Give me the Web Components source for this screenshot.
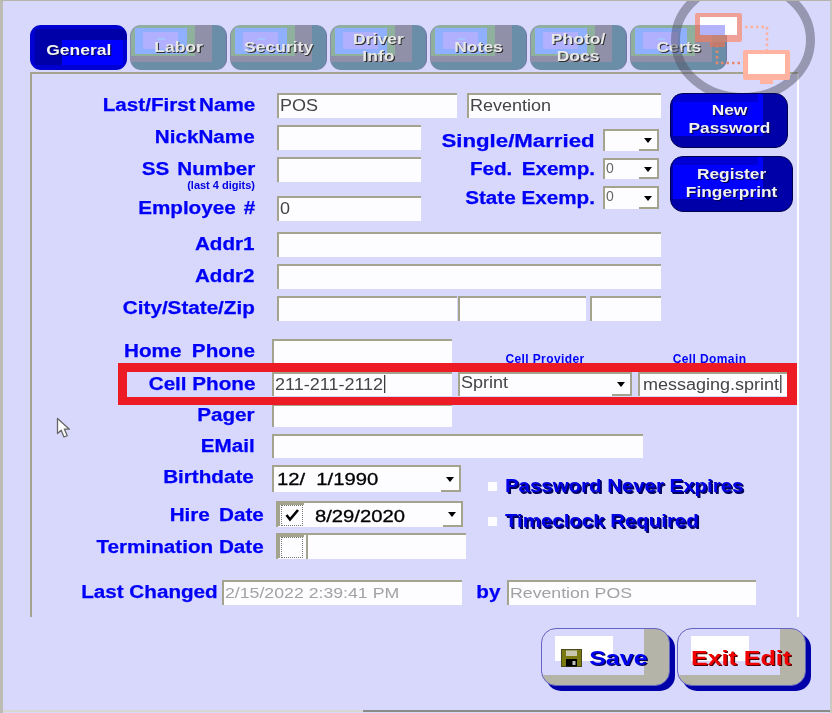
<!DOCTYPE html>
<html><head><meta charset="utf-8"><title>Employee</title>
<style>html,body{margin:0;padding:0;background:#d8d8fc}</style></head>
<body>
<x-screen>
  <x-tabs>
    <x-tab active>General</x-tab>
    <x-tab>Labor</x-tab>
    <x-tab>Security</x-tab>
    <x-tab>Driver<br>Info</x-tab>
    <x-tab>Notes</x-tab>
    <x-tab>Photo/<br>Docs</x-tab>
    <x-tab>Certs</x-tab>
  </x-tabs>
  <x-panel>
    <x-row style="margin-top:19px">
      <x-col style="width:425px;gap:7px">
        <x-field label="Last/First Name" lw="223" gap="22" w="180" h="25" value="POS" style="--ws:-2px"></x-field>
        <x-field label="NickName" lw="223" gap="22" w="144" h="25"></x-field>
        <x-field label="SS Number" lw="223" gap="22" w="144" h="25" style="--ws:2px"><x-sub slot="sub">(last 4 digits)</x-sub></x-field>
        <x-field style="margin-top:7px;--ws:2px" label="Employee #" lw="223" gap="22" w="144" h="25" value="0"></x-field>
      </x-col>
      <x-col style="width:194px;margin-left:10px">
        <x-input style="width:194px;height:25px">Revention</x-input>
        <x-pick style="margin-top:11px;--sx:1.27" label="Single/Married" w="56" h="22"></x-pick>
        <x-pick style="margin-top:6px;--ws:3px" label="Fed. Exemp." w="56" h="21" value="0"></x-pick>
        <x-pick style="margin-top:6px" label="State Exemp." w="56" h="23" value="0"></x-pick>
      </x-col>
      <x-col style="margin-left:9px;gap:8px">
        <x-bluebtn style="width:118px;height:55px">New<br>Password</x-bluebtn>
        <x-bluebtn style="width:123px;height:56px">Register<br>Fingerprint</x-bluebtn>
      </x-col>
    </x-row>
    <x-col style="margin-top:11px;gap:7px">
      <x-field label="Addr1" lw="223" gap="22" w="384" h="25"></x-field>
      <x-field label="Addr2" lw="223" gap="22" w="384" h="25"></x-field>
      <x-row style="height:25px">
        <x-field label="City/State/Zip" lw="223" gap="22" w="180" h="25"></x-field>
        <x-input style="width:128px;height:25px;margin-left:1px"></x-input>
        <x-input style="width:71px;height:25px;margin-left:4px"></x-input>
      </x-row>
    </x-col>
    <x-col style="margin-top:18px;gap:8px">
      <x-row style="height:24px">
        <x-field label="Home Phone" lw="223" gap="17" w="180" h="24" style="--ws:4px"></x-field>
        <x-cap style="width:174px;margin-left:6px">Cell Provider</x-cap>
        <x-cap style="width:143px;margin-left:6px">Cell Domain</x-cap>
      </x-row>
      <x-row style="height:24px;margin-top:1px;--ilh:17px">
        <x-field label="Cell Phone" lw="223" gap="17" w="180" h="24" value="211-211-2112" caret></x-field>
        <x-select style="width:174px;height:24px;margin-left:6px;--tc:#444">Sprint</x-select>
        <x-input style="width:149px;height:24px;margin-left:6px;padding-left:3px" caret>messaging.sprint</x-input>
      </x-row>
      <x-field label="Pager" lw="223" gap="17" w="180" h="23"></x-field>
      <x-field style="margin-top:-1px" label="EMail" lw="223" gap="17" w="371" h="24"></x-field>
    </x-col>
    <x-row style="margin-top:7px">
      <x-col style="width:434px">
        <x-row style="height:27px">
          <x-lbl style="width:222px;height:25px">Birthdate</x-lbl>
          <x-select dark style="width:189px;height:27px;margin-left:18px;--tc:#000"><span style="white-space:pre">12/  1/1990</span></x-select>
        </x-row>
        <x-row style="height:26px;margin-top:9px">
          <x-lbl style="width:232px;height:28px;--ws:3px">Hire Date</x-lbl>
          <x-datecheck checked style="margin-left:12px"><x-select dark bare style="width:157px;height:24px;--tc:#000;">8/29/2020</x-select></x-datecheck>
        </x-row>
        <x-row style="height:26px;margin-top:6px">
          <x-lbl style="width:232px;height:28px">Termination Date</x-lbl>
          <x-datecheck style="margin-left:12px"><x-input style="width:160px;height:24px"></x-input></x-datecheck>
        </x-row>
      </x-col>
      <x-col style="margin-left:22px;padding-top:11px;gap:15px">
        <x-check>Password Never Expires</x-check>
        <x-check>Timeclock Required</x-check>
      </x-col>
    </x-row>
    <x-row style="margin-top:21px;height:25px">
      <x-lbl style="width:186px;height:25px">Last Changed</x-lbl>
      <x-input muted style="width:240px;height:25px;margin-left:4px">2/15/2022 2:39:41 PM</x-input>
      <x-lbl style="width:38px;height:25px">by</x-lbl>
      <x-input muted style="width:249px;height:25px;margin-left:7px">Revention POS</x-input>
    </x-row>
  </x-panel>
  <x-actions>
    <x-actionbtn icon style="width:129px;color:#0000f0;--sh:#00004a">Save</x-actionbtn>
    <x-actionbtn style="width:129px;margin-left:7px;color:#f00000;--sh:#500000">Exit Edit</x-actionbtn>
  </x-actions>
  <x-edge></x-edge>
  <x-netmark></x-netmark>
  <x-callout></x-callout>
  <x-pointer></x-pointer>
</x-screen>
<script>
const LAB = '"Liberation Sans",Arial,sans-serif';
function def(name, css, html){
  customElements.define(name, class extends HTMLElement{
    constructor(){
      super();
      this.attachShadow({mode:'open'});
    }
    connectedCallback(){
      if(this._done) return; this._done=1;
      const a=n=>this.getAttribute(n);
      const h=typeof html==='function'?html(a,this):html;
      this.shadowRoot.innerHTML='<style>'+css+'</style>'+h;
    }
  });
}
def('x-screen',`:host{display:flex;flex-direction:column;position:relative;box-sizing:border-box;width:832px;height:713px;overflow:hidden;background:#d8d8fc;border-top:1px solid #b4b4a8;border-left:3px solid #bcbcb4;border-right:2px solid #c8c8c0;font-family:${LAB};filter:blur(.3px)}`,'<slot></slot>');
def('x-tabs',`:host{display:flex;gap:3px;margin:24px 0 0 27px}`,'<slot></slot>');
const tabLayers=`
 linear-gradient(#a8c4ff,#a8c4ff) 27px 13px/8px 2px no-repeat,
 linear-gradient(#b0b0ff,#b0b0ff) 13px 7px/35px 17px no-repeat,
 linear-gradient(#8fb0ff,#8fb0ff) 5px 3px/52px 26px no-repeat,
 linear-gradient(#8fb09c,#8fb09c) 0 0/65px 31px no-repeat,
 linear-gradient(#9090a8,#9090a8) 0 0/82px 37px no-repeat,#6b8ea8`;
const genLayers=`
 linear-gradient(#0000ff,#0000ff) 32px 15px/61px 25px no-repeat,
 linear-gradient(#0000a8,#0000a8) 5px 4px/100px 11px no-repeat,
 linear-gradient(#0000a8,#0000a8) 5px 15px/27px 25px no-repeat,#0000d0`;
def('x-tab',`:host{display:flex;align-items:center;justify-content:center;text-align:center;box-sizing:border-box;width:97px;height:45px;border-radius:11px;padding-bottom:2px;background:${tabLayers};box-shadow:inset -1px 0 0 #7474a8,inset 1px 0 0 #8a8ab0;font:bold 15.5px/17px ${LAB};color:#e8e8e8;text-shadow:1px 1px 0 #303030}
:host([active]){background:${genLayers};box-shadow:none;color:#f4f4f4;text-shadow:1px 1px 0 #000060;padding-top:3px;padding-bottom:0}
span{display:inline-block;transform:scaleX(1.13)}`,'<span><slot></slot></span>');
def('x-panel',`:host{display:block;box-sizing:border-box;width:769px;height:545px;margin:2px 0 0 27px;border-top:2px solid #a4a48e;border-left:2px solid #a4a48e;border-right:2px solid #fcfcff}`,'<slot></slot>');
def('x-row',`:host{display:flex;align-items:flex-start}`,'<slot></slot>');
def('x-col',`:host{display:flex;flex-direction:column;flex:none}`,'<slot></slot>');
def('x-lbl',`:host{display:flex;flex:none;align-items:center;justify-content:flex-end;color:#0000f8;font:bold 17.5px ${LAB};-webkit-text-stroke:.25px #0000f8;word-spacing:var(--ws,0);white-space:nowrap}
span{display:inline-block;transform:scaleX(var(--sx,1.18));transform-origin:100% 50%}`,'<span><slot></slot></span>');
def('x-sub',`:host{display:block;text-align:right;color:#0000e0;font:bold 11px/12px ${LAB};margin-top:-3px}`,'<slot></slot>');
def('x-cap',`:host{display:block;flex:none;text-align:center;color:#0000f8;font:bold 12px/14px ${LAB};letter-spacing:.4px;margin-top:13px}`,'<slot></slot>');
const inputCss=`:host{display:block;flex:none;box-sizing:border-box;background:#fdfdff;border-top:2px solid #a4a48e;border-left:2px solid #a4a48e;padding:1px 0 0 1px;color:#444;font:16px/var(--ilh,20px) ${LAB};white-space:nowrap;overflow:hidden}
:host([muted]){color:#a2a2a2;font-size:15px;--ix:1.18}
span{display:inline-block;transform:scaleX(var(--ix,1.125));transform-origin:0 50%}
i{display:inline-block;width:1px;height:18px;background:#222;vertical-align:-3px;margin-left:1px}`;
def('x-input',inputCss,(a,t)=>'<span><slot></slot>'+(t.hasAttribute('caret')?'<i></i>':'')+'</span>');
def('x-field',`:host{display:flex;flex:none;align-items:flex-start}
.l{flex:none;display:block;text-align:right}`,(a,t)=>{
  const w=a('w'),h=a('h');
  return `<div class="l" style="width:${a('lw')}px;height:${h}px"><x-lbl style="height:${h}px">${a('label')}</x-lbl><slot name="sub"></slot></div>
  <x-input ${t.hasAttribute('caret')?'caret':''} style="margin-left:${a('gap')}px;width:${w}px;height:${h}px">${a('value')||''}</x-input>`;
});
def('x-select',`:host{display:flex;flex:none;box-sizing:border-box;position:relative;background:#fdfdff;border-top:2px solid #a4a48e;border-left:2px solid #a4a48e;border-right:2px solid #a4a48e;color:var(--tc,#444);font:16px/var(--ilh,21px) ${LAB};padding-left:1px;white-space:nowrap}
:host([dark]){font-size:17px;line-height:26px;-webkit-text-stroke:.3px #000;padding-left:3px;--zx:1.19}
:host([bare]){padding-left:9px;line-height:27px}
.t{flex:1;overflow:hidden}
.t span{display:inline-block;transform:scaleX(var(--zx,1.125));transform-origin:0 50%}
.b{flex:none;width:18px;box-sizing:border-box;border-bottom:2px solid #a4a48e;display:flex;align-items:center;justify-content:center}
.b::after{content:"";border:4px solid transparent;border-top:5px solid #000;border-bottom:0;margin-top:1px}`,'<div class="t"><span><slot></slot></span></div><div class="b"></div>');
def('x-pick',`:host{display:flex;flex:none;align-items:flex-start;justify-content:flex-end;width:192px}
x-lbl{margin-right:8px;margin-top:1px}
x-select{font-size:14px;line-height:16px;--zx:1}`,(a)=>`<x-lbl style="height:${a('h')}px">${a('label')}</x-lbl><x-select style="width:${a('w')}px;height:${a('h')}px;--tc:#666">${a('value')||''}</x-select>`);
const blueLayers=`linear-gradient(#0000d4,#0000d4) 2px 0/85px 8px no-repeat,linear-gradient(#0000ff,#0000ff) 2px 0/90px 42px no-repeat,#0000a8`;
def('x-bluebtn',`:host{display:flex;position:relative;z-index:3;align-items:center;justify-content:center;text-align:center;box-sizing:border-box;border:1px solid #000050;border-radius:13px;padding-bottom:3px;background:${blueLayers};color:#f0f0f0;font:bold 15px/18px ${LAB};text-shadow:1px 1px 0 #000050}
span{display:inline-block;transform:scaleX(1.155)}`,'<span><slot></slot></span>');
def('x-datecheck',`:host{display:flex;flex:none;box-sizing:border-box;position:relative;background:#fdfdff}
.c{position:absolute;z-index:1;left:2px;top:2px;width:26px;height:23px;box-sizing:border-box;border:2px solid #a4a48e;border-right:0;border-bottom:0;display:flex;align-items:center;justify-content:center}
.c span{display:block;box-sizing:border-box;width:22px;height:21px;border:1px dotted #777;background:#fdfdff}
.w{display:flex;padding-left:28px;background:#fdfdff;border-top:2px solid #a4a48e;border-left:2px solid #a4a48e}
svg{display:block;margin:2px 0 0 2px}
::slotted(x-select){border-top:0!important;border-left:0!important}
::slotted(x-input){border-top:0!important}`,(a,t)=>`<div class="c"><span>${t.hasAttribute('checked')?'<svg width="16" height="14" viewBox="0 0 16 14"><path d="M2.5 7 L6 11.5 L14 2" fill="none" stroke="#000" stroke-width="2.6"/></svg>':''}</span></div><div class="w"><slot></slot></div>`);
def('x-check',`:host{display:flex;align-items:center;height:20px;color:#0000e8;font:bold 17.5px/20px ${LAB};text-shadow:1px 1px 0 #000060,1.5px 1.5px 0 #000060;white-space:nowrap}
b{flex:none;display:block;width:9px;height:9px;background:#fdfdff;margin-right:8px}
span{display:inline-block;transform:scaleX(1.167);transform-origin:0 50%}`,'<b></b><span><slot></slot></span>');
def('x-actions',`:host{display:flex;margin:11px 0 0 538px}`,'<slot></slot>');
const actLayers=`linear-gradient(#fff,#fff) 13px 7px/58px 25px no-repeat,linear-gradient(#d8d8fc,#d8d8fc) 0 0/102px 46px no-repeat,#b5b4a8`;
def('x-actionbtn',`:host{display:flex;flex:none;align-items:center;justify-content:center;box-sizing:border-box;height:58px;border:1px solid #6464c4;border-radius:15px;background:${actLayers};box-shadow:5px 5px 0 #0000a8;font:bold 20px ${LAB};text-shadow:1px 1px 0 var(--sh);padding-top:2px}
:host([icon]){padding-right:8px}
span{display:inline-block;transform:scaleX(1.25)}
svg{display:block;flex:none;margin-right:13px}`,(a,t)=>t.hasAttribute('icon')?`<svg width="21" height="18" viewBox="0 0 21 18"><rect x=".5" y=".5" width="20" height="17" fill="#7a7a10" stroke="#4a4a20"/><rect x="5" y="1.5" width="11" height="5.5" fill="#c8c8b0"/><rect x="5" y="10" width="11" height="7.5" fill="#000"/><rect x="11.5" y="12" width="3" height="4" fill="#c0c0c0"/></svg><span><slot></slot></span>`:'<span><slot></slot></span>');
def('x-edge',`:host{display:flex;position:absolute;left:-3px;right:-2px;bottom:1px;height:2px}
i{display:block;flex:none;width:363px;background:#d8d8d0}u{display:block;flex:1;background:#8a8a88}`,'<i></i><u></u>');
def('x-netmark',`:host{display:block;position:absolute;z-index:2;left:657px;top:-1px;width:172px;height:112px;pointer-events:none}
svg{display:block}`,`<svg width="172" height="112" viewBox="660 0 172 112">
<ellipse cx="743" cy="40" rx="67.5" ry="57.5" fill="none" stroke="rgba(80,80,96,.48)" stroke-width="9"/>
<path d="M745 27H767V50" fill="none" stroke="#ffb09a" stroke-width="2.5" stroke-dasharray="2.5 3"/>
<path d="M740 63H717V47" fill="none" stroke="#e88868" stroke-width="2.5" stroke-dasharray="2.5 3"/>
<path d="M700 17H737V35H725V25H700Z" fill="#fff"/>
<rect x="700" y="25" width="25" height="10" fill="#b4b4fc"/>
<path fill-rule="evenodd" d="M697 13H740a2 2 0 0 1 2 2V40a2 2 0 0 1-2 2H697a2 2 0 0 1-2-2V15a2 2 0 0 1 2-2ZM700 17V35H737V17Z" fill="rgba(255,125,85,.6)"/>
<rect x="710" y="42" width="15" height="5" fill="rgba(255,110,70,.6)"/>
<rect x="748" y="54" width="37" height="20" fill="#fff"/>
<path fill-rule="evenodd" d="M745 50H788a2 2 0 0 1 2 2V78a2 2 0 0 1-2 2H745a2 2 0 0 1-2-2V52a2 2 0 0 1 2-2ZM748 54V74H785V54Z" fill="#ffb3a0"/>
<rect x="760" y="80" width="13" height="4" fill="#ffb3a0"/>
</svg>`);
def('x-callout',`:host{display:block;position:absolute;z-index:4;left:115px;top:362px;box-sizing:border-box;width:679px;height:42px;border:solid #ed1c24;border-width:9px 10px 8px 9px;pointer-events:none}`,'');
def('x-pointer',`:host{display:block;position:absolute;z-index:4;left:53px;top:416px;width:18px;height:22px}`,`<svg width="18" height="22" viewBox="0 0 18 22"><path d="M1.5 1.5V16.5L5.2 13.2L8 20L11.2 18.6L8.4 12.2H13.4Z" fill="#fff" stroke="#666" stroke-width="1.3" stroke-linejoin="round"/></svg>`);
</script>
</body></html>
